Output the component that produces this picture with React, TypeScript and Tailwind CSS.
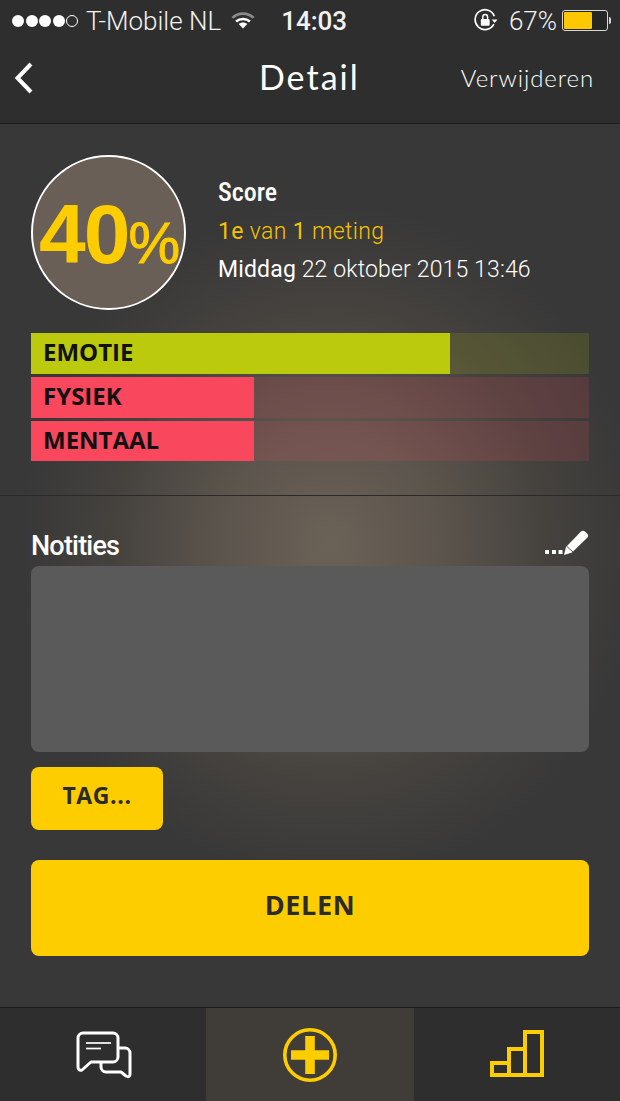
const SANS = 'font-["Open_Sans",sans-serif]';

function StatusBar() {
    return (
        <div className="flex h-10 items-center pl-[12px] pr-[9px] pt-px text-[#f2f2f2] font-['Roboto',sans-serif]">
            <div className="flex items-center gap-[1.5px]">
                {[0, 1, 2, 3].map((i) => (
                    <span key={i} className="h-3 w-3 rounded-full bg-white" />
                ))}
                <span className="h-3 w-3 rounded-full border border-white" />
            </div>
            <span className="ml-[8px] text-[26px] font-light leading-none">T-Mobile NL</span>
            <svg className="ml-[10px]" width="24" height="17" viewBox="0 0 22 16">
                <path d="M1 5.5 C6.5 0.2 15.5 0.2 21 5.5" fill="none" stroke="#8a8a8a" strokeWidth="2.4" />
                <path d="M4.5 9 C8 5.8 14 5.8 17.5 9" fill="none" stroke="#fff" strokeWidth="2.4" />
                <path d="M7 11.4 C9.4 9.5 12.6 9.5 15 11.4 L11 15.6 Z" fill="#fff" />
            </svg>
            <span className="ml-[26px] text-[26px] font-medium leading-none">14:03</span>
            <div className="ml-auto flex items-center">
                <svg width="25" height="25" viewBox="0 0 24 24">
                    <path d="M20 15.5 A9.5 9.5 0 1 1 20.5 8" fill="none" stroke="#fff" strokeWidth="1.6" />
                    <path d="M18 11 L23.5 11 L20.7 14.5 Z" fill="#fff" />
                    <rect x="7.5" y="10.5" width="8.5" height="6.5" rx="1" fill="#fff" />
                    <path d="M9.4 10.5 V8.6 a2.3 2.3 0 0 1 4.6 0 V10.5" fill="none" stroke="#fff" strokeWidth="1.4" />
                </svg>
                <span className="ml-[11px] text-[26px] font-light leading-none">67%</span>
                <div className="ml-[5px] flex items-center">
                    <div className="h-[21px] w-[46px] rounded-[3px] border border-[#d8d8d8] bg-[#262626] p-[1px]">
                        <div className="h-full w-[28px] rounded-[1px] bg-[#fdc800]" />
                    </div>
                    <div className="ml-px h-[7px] w-[2px] rounded-r-full bg-[#d8d8d8]" />
                </div>
            </div>
        </div>
    );
}

function NavBar() {
    return (
        <div className="relative flex h-[84px] items-center justify-between border-b border-[#1d1d1d] pb-[7px] pl-[14px] pr-[26px]">
            <svg width="20" height="32" viewBox="0 0 20 32" fill="none" stroke="#fff" strokeWidth="4">
                <path d="M17 2 L3.5 16 L17 30" />
            </svg>
            <span className="absolute left-[259px] top-[15px] text-[34px] leading-[44px] tracking-[2px] text-white font-['Lato',sans-serif] font-normal">
                Detail
            </span>
            <span className="text-[24px] font-light tracking-[0.9px] text-white font-['Lato',sans-serif]">
                Verwijderen
            </span>
        </div>
    );
}

function ScoreBar({
    label,
    width,
    fill,
    track,
    height,
}: {
    label: string;
    width: string;
    fill: string;
    track: string;
    height: string;
}) {
    return (
        <div className={`flex ${height} ${track}`}>
            <div className={`flex items-center pb-[3px] pl-[12px] ${width} ${fill}`}>
                <span className={`text-[24px] font-bold leading-none text-[#111111] ${SANS}`}>
                    {label}
                </span>
            </div>
        </div>
    );
}

function TabBar() {
    return (
        <div className="grid h-[94px] grid-cols-[206px_208px_206px] border-t border-[#1d1d1d] bg-[#2e2e2e]">
            <div className="flex items-center justify-center pt-px pl-[1px]">
                <svg width="56" height="48" viewBox="0 0 56 48" fill="none" stroke="#fff" strokeWidth="3" strokeLinejoin="round">
                    <path d="M7 2 H37 a5 5 0 0 1 5 5 V26 a5 5 0 0 1 -5 5 H15 L6 39 Q2 40 2 36 V7 a5 5 0 0 1 5 -5 Z" />
                    <path d="M42 17 H49 a5 5 0 0 1 5 5 V43 Q54 47 50 45 L45 41 H30 a5 5 0 0 1 -5 -5 V31" />
                    <path d="M10 12 H35" strokeWidth="1.7" />
                    <path d="M10 17.5 H25" strokeWidth="1.7" />
                </svg>
            </div>
            <div className="flex items-center justify-center bg-[#403c38]">
                <svg width="56" height="56" viewBox="0 0 56 56">
                    <circle cx="28" cy="28" r="25.2" fill="none" stroke="#fdcd00" strokeWidth="3.6" />
                    <path d="M23.2 9 H32.8 V23.2 H47 V32.8 H32.8 V47 H23.2 V32.8 H9 V23.2 H23.2 Z" fill="#fdcd00" />
                </svg>
            </div>
            <div className="flex items-center justify-center pb-[2px]">
                <svg width="54" height="47" viewBox="0 0 54 47" fill="none" stroke="#fdcd00" strokeWidth="4">
                    <rect x="2" y="33" width="17" height="12" />
                    <rect x="19" y="19" width="16" height="26" />
                    <rect x="35" y="2" width="17" height="43" />
                </svg>
            </div>
        </div>
    );
}

export default function App() {
    return (
        <div className="flex h-[1101px] w-[620px] flex-col overflow-hidden bg-[#2e2e2e]">
            <StatusBar />
            <NavBar />
            <div className="flex flex-1 flex-col bg-[#383838] bg-[radial-gradient(ellipse_310px_340px_at_330px_420px,#6b6257_0%,#5c554d_35%,#45423e_70%,#383838_100%)]">
                <div className="flex px-[31px] pt-[31px]">
                    <div className="flex h-[155px] w-[155px] shrink-0 items-baseline justify-center rounded-full border-2 border-white bg-[#695f56] pl-[2px] pt-[35px] font-['Liberation_Sans',sans-serif] font-bold text-[#fdcd00]">
                        <span className="text-[84px] leading-none tracking-[-2px]">40</span>
                        <span className="text-[58px] font-normal leading-none [-webkit-text-stroke:1px_#fdcd00]">%</span>
                    </div>
                    <div className="ml-[32px] flex flex-col pt-[19px] font-['Roboto',sans-serif]">
                        <span className="text-[26px] font-medium leading-[36px] text-white [font-stretch:condensed]">
                            Score
                        </span>
                        <span className="mt-[3px] text-[23px] font-light leading-[38px] tracking-[0.35px] text-[#f4c300]">
                            <span className="font-normal">1e</span> van <span className="font-normal">1</span> meting
                        </span>
                        <span className="text-[23px] font-light leading-[38px] tracking-[0.15px] text-white">
                            <span className="font-normal">Middag</span> 22 oktober 2015 13:46
                        </span>
                    </div>
                </div>

                <div className="mx-[31px] mt-[23px] flex flex-col gap-[3px]">
                    <ScoreBar label="EMOTIE" width="w-[419px]" fill="bg-[#bbca0c]" track="bg-[#bbca0c]/15" height="h-[41px]" />
                    <ScoreBar label="FYSIEK" width="w-[223px]" fill="bg-[#f9475e]" track="bg-[#f9475e]/15" height="h-[41px]" />
                    <ScoreBar label="MENTAAL" width="w-[223px]" fill="bg-[#f9475e]" track="bg-[#f9475e]/15" height="h-[40px]" />
                </div>

                <div className="mt-[34px] border-t border-[#2a2a2a]" />

                <div className="mt-[31px] flex items-end justify-between px-[31px]">
                    <span className="text-[27px] font-medium leading-[38px] tracking-[-0.8px] text-white font-['Roboto',sans-serif]">
                        Notities
                    </span>
                    <svg className="mb-[9px]" width="44" height="26" viewBox="0 0 44 26" fill="#fff">
                        <rect x="0" y="20" width="4" height="4" />
                        <rect x="7" y="20" width="4" height="4" />
                        <rect x="13.5" y="20" width="4" height="4" />
                        <path d="M19 25 L21 17 L36 1.5 Q38 0 40 1.5 L42.5 4 Q44 6 42.5 7.5 L27 22.5 Z" />
                        <path d="M22 16.5 L28 22" stroke="#5a5550" strokeWidth="1" />
                    </svg>
                </div>

                <div className="mx-[31px] mt-[1px] h-[186px] rounded-[8px] bg-[#5a5a5a]" />

                <button className={`mx-[31px] mt-[15px] h-[63px] w-[132px] rounded-[8px] bg-[#fdcd00] pb-[6px] text-[23px] font-bold tracking-[0.6px] text-[#2b2b2b] ${SANS}`}>
                    TAG...
                </button>

                <button className={`mx-[31px] mt-[30px] h-[96px] rounded-[8px] bg-[#fdcd00] pb-[6px] text-[27px] font-bold tracking-[0.6px] text-[#2b2b2b] ${SANS}`}>
                    DELEN
                </button>
            </div>
            <TabBar />
        </div>
    );
}
